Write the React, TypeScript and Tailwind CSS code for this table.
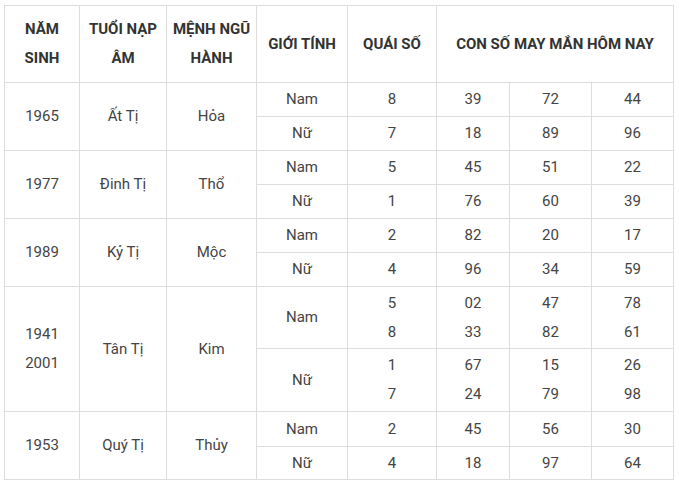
type Row = { g: string; q: string[]; n: string[][]; h: string };
type Group = { year: string[]; tuoi: string; menh: string; rows: Row[] };

const groups: Group[] = [
  {
    year: ['1965'],
    tuoi: 'Ất Tị',
    menh: 'Hỏa',
    rows: [
      { g: 'Nam', q: ['8'], n: [['39'], ['72'], ['44']], h: 'h-[34px]' },
      { g: 'Nữ', q: ['7'], n: [['18'], ['89'], ['96']], h: 'h-[34px]' },
    ],
  },
  {
    year: ['1977'],
    tuoi: 'Đinh Tị',
    menh: 'Thổ',
    rows: [
      { g: 'Nam', q: ['5'], n: [['45'], ['51'], ['22']], h: 'h-[34px]' },
      { g: 'Nữ', q: ['1'], n: [['76'], ['60'], ['39']], h: 'h-[34px]' },
    ],
  },
  {
    year: ['1989'],
    tuoi: 'Kỷ Tị',
    menh: 'Mộc',
    rows: [
      { g: 'Nam', q: ['2'], n: [['82'], ['20'], ['17']], h: 'h-[34px]' },
      { g: 'Nữ', q: ['4'], n: [['96'], ['34'], ['59']], h: 'h-[34px]' },
    ],
  },
  {
    year: ['1941', '2001'],
    tuoi: 'Tân Tị',
    menh: 'Kim',
    rows: [
      { g: 'Nam', q: ['5', '8'], n: [['02', '33'], ['47', '82'], ['78', '61']], h: 'h-[62px]' },
      { g: 'Nữ', q: ['1', '7'], n: [['67', '24'], ['15', '79'], ['26', '98']], h: 'h-[63px]' },
    ],
  },
  {
    year: ['1953'],
    tuoi: 'Quý Tị',
    menh: 'Thủy',
    rows: [
      { g: 'Nam', q: ['2'], n: [['45'], ['56'], ['30']], h: 'h-[35px]' },
      { g: 'Nữ', q: ['4'], n: [['18'], ['97'], ['64']], h: 'h-[33px]' },
    ],
  },
];

function Lines({ items }: { items: string[] }) {
  return (
    <>
      {items.map((t, i) => (
        <div key={i}>{t}</div>
      ))}
    </>
  );
}

export default function App() {
  const td = 'border border-[#dddddd] p-0 text-center align-middle';
  const th = 'border border-[#dddddd] p-0 text-center align-middle font-bold text-[#333333]';
  return (
    <div className="bg-white w-[679px] h-[483px] pt-[5px] pl-[4px] font-['Roboto',sans-serif] text-[15px] leading-[29px] text-[#444444]">
      <table className="table-fixed border-collapse w-[669px]">
        <colgroup>
          <col className="w-[75px]" />
          <col className="w-[87px]" />
          <col className="w-[90px]" />
          <col className="w-[91px]" />
          <col className="w-[89px]" />
          <col className="w-[73px]" />
          <col className="w-[82px]" />
          <col className="w-[82px]" />
        </colgroup>
        <thead>
          <tr className="h-[77px]">
            <th className={th}>NĂM<br />SINH</th>
            <th className={th}>TUỔI NẠP<br />ÂM</th>
            <th className={th}>MỆNH NGŨ<br />HÀNH</th>
            <th className={th}>GIỚI TÍNH</th>
            <th className={th}>QUÁI SỐ</th>
            <th className={th} colSpan={3}>CON SỐ MAY MẮN HÔM NAY</th>
          </tr>
        </thead>
        <tbody>
          {groups.map((grp) =>
            grp.rows.map((r, i) => (
              <tr key={grp.tuoi + r.g} className={r.h}>
                {i === 0 && (
                  <>
                    <td className={td} rowSpan={2}>
                      <Lines items={grp.year} />
                    </td>
                    <td className={td} rowSpan={2}>{grp.tuoi}</td>
                    <td className={td} rowSpan={2}>{grp.menh}</td>
                  </>
                )}
                <td className={td}>{r.g}</td>
                <td className={td}>
                  <Lines items={r.q} />
                </td>
                {r.n.map((col, j) => (
                  <td key={j} className={td}>
                    <Lines items={col} />
                  </td>
                ))}
              </tr>
            ))
          )}
        </tbody>
      </table>
    </div>
  );
}
